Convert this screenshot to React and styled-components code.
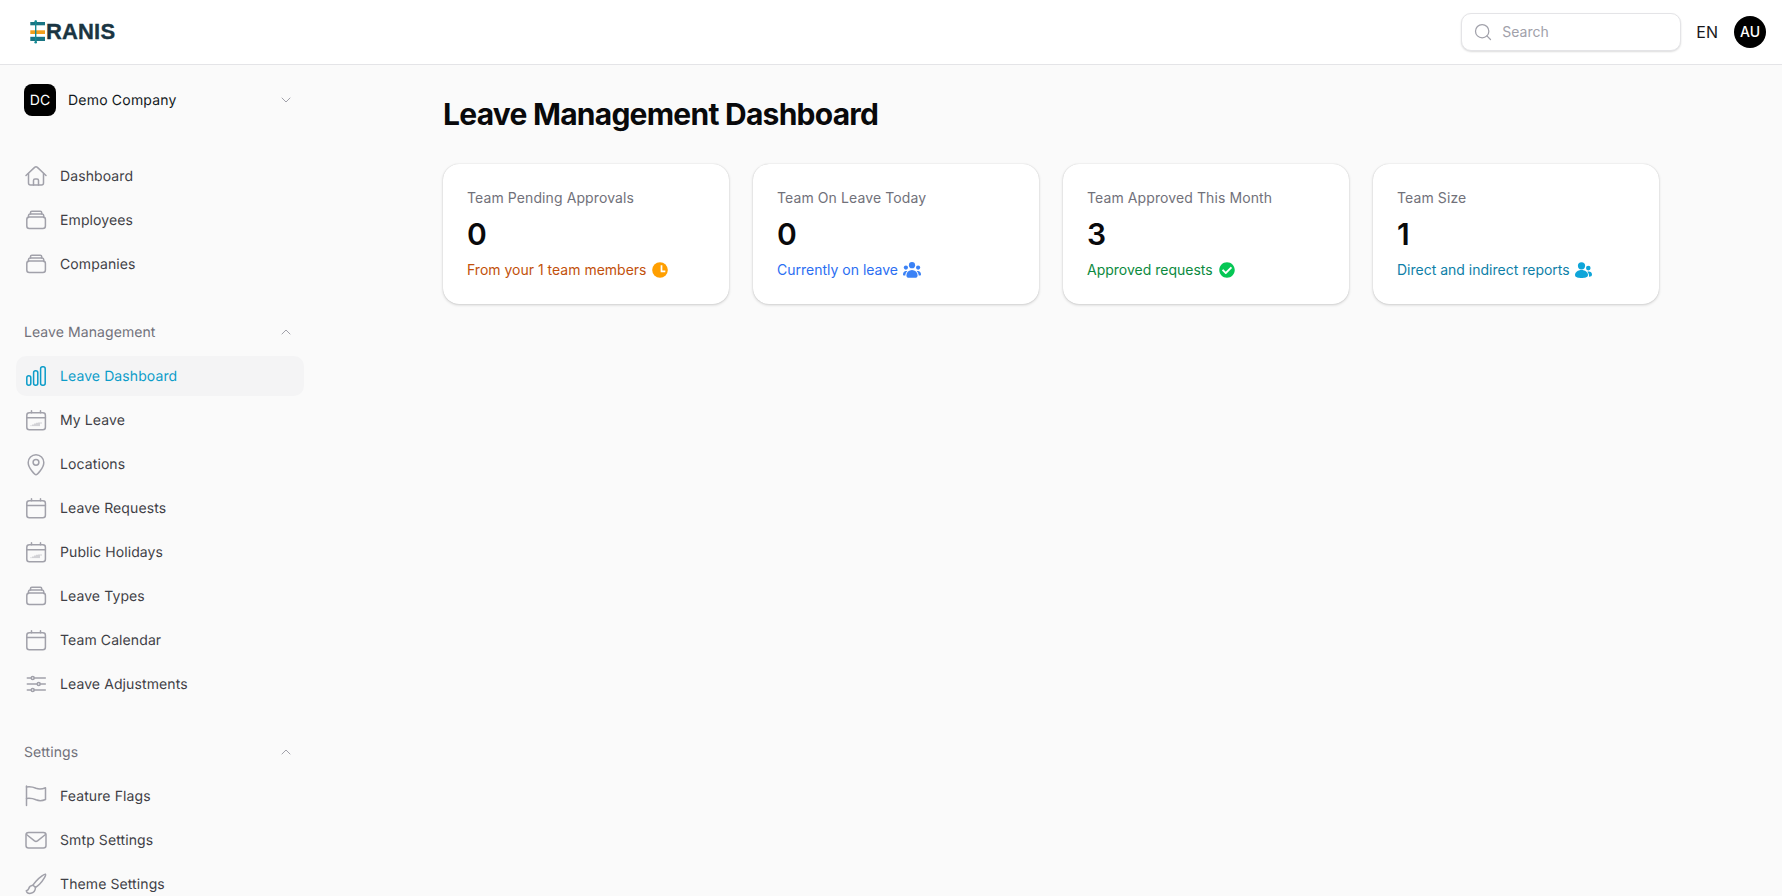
import React from 'react';
import styled, { createGlobalStyle } from 'styled-components';
import { Search, ChevronDown, ChevronUp } from 'lucide-react';
import { FaCheckCircle } from 'react-icons/fa';

const Global = createGlobalStyle`
  html, body { margin: 0; padding: 0; height: 100%; overflow: hidden; background: #fafafa; }
  body { font-family: Inter, "Noto Sans", sans-serif; color: #11181c; }
  * { box-sizing: border-box; }
`;

const Shell = styled.div`
  display: flex;
  flex-direction: column;
  height: 896px;
  overflow: hidden;
`;

const Header = styled.header`
  flex: none;
  height: 65px;
  display: flex;
  align-items: center;
  justify-content: space-between;
  padding: 0 16px 1px 30px;
  background: #fff;
  border-bottom: 1px solid #e4e4e7;
`;

const Logo = styled.div`
  display: flex;
  align-items: center;
`;

const LogoWord = styled.span`
  font-family: "Liberation Sans", Arial, sans-serif;
  font-size: 22px;
  font-weight: 700;
  line-height: 24px;
  letter-spacing: 0.15px;
  color: #1a3542;
  -webkit-text-stroke: 0.35px #1a3542;
`;

const HeaderRight = styled.div`
  display: flex;
  align-items: center;
`;

const SearchBox = styled.div`
  width: 220px;
  height: 38px;
  display: flex;
  align-items: center;
  gap: 9px;
  padding: 0 11px;
  background: #fff;
  border: 1px solid #e4e4e7;
  border-radius: 10px;
  box-shadow: 0 1px 2px rgba(0, 0, 0, 0.14);
  color: #a1a1aa;
  font-size: 14px;
  margin-right: 15px;
`;

const Lang = styled.span`
  font-size: 16px;
  color: #18181b;
  margin-right: 16px;
`;

const UserAvatar = styled.div`
  width: 32px;
  height: 32px;
  border-radius: 50%;
  background: #000;
  color: #fff;
  font-size: 14px;
  font-weight: 500;
  display: flex;
  align-items: center;
  justify-content: center;
`;

const Body = styled.div`
  flex: 1;
  min-height: 0;
  display: flex;
`;

const Sidebar = styled.aside`
  flex: none;
  width: 320px;
  padding: 19px 16px 0;
  overflow: hidden;
  text-rendering: geometricPrecision;
`;

const Company = styled.div`
  display: flex;
  align-items: center;
  gap: 12px;
  padding-left: 8px;
  height: 32px;
  margin-bottom: 40px;
  font-size: 14px;
  font-weight: 400;
  letter-spacing: 0.2px;
  color: #11181c;
`;

const CompanyBadge = styled.div`
  width: 32px;
  height: 32px;
  border-radius: 8px;
  background: #000;
  color: #fff;
  font-size: 14px;
  font-weight: 400;
  letter-spacing: 0;
  display: flex;
  align-items: center;
  justify-content: center;
`;

const Grow = styled.span`
  flex: 1;
`;

const Caret = styled.span`
  display: flex;
  width: 16px;
  margin-right: 10px;
  color: #a1a1aa;
`;

const Nav = styled.nav`
  display: flex;
  flex-direction: column;
  gap: 4px;
  margin-bottom: 38px;
`;

const SectionHead = styled.div`
  display: flex;
  align-items: center;
  height: 20px;
  padding-left: 8px;
  margin-bottom: 14px;
  font-size: 14px;
  letter-spacing: 0.08px;
  color: #71717a;
`;

const Item = styled.div`
  flex: none;
  height: 40px;
  display: flex;
  align-items: center;
  gap: 12px;
  padding: 0 8px;
  border-radius: 10px;
  font-size: 14px;
  font-weight: 400;
  letter-spacing: 0.1px;
  background: ${p => (p.$active ? '#f4f4f5' : 'transparent')};
  color: ${p => (p.$active ? '#0c9cc9' : '#3f3f46')};
  & > svg {
    flex: none;
    width: 24px;
    height: 24px;
    fill: none;
    stroke: ${p => (p.$active ? '#0c9cc9' : '#a1a1aa')};
    stroke-width: 1.5;
    stroke-linecap: round;
    stroke-linejoin: round;
  }
`;

const Main = styled.main`
  flex: 1;
  min-width: 0;
`;

const Container = styled.div`
  max-width: 1280px;
  margin: 0 auto;
  padding: 31px 32px 0;
`;

const Title = styled.h1`
  margin: 0 0 32px;
  font-size: 30px;
  line-height: 36px;
  font-weight: 700;
  letter-spacing: -0.75px;
  color: #09090b;
`;

const Cards = styled.div`
  display: grid;
  grid-template-columns: repeat(4, 1fr);
  gap: 24px;
`;

const Card = styled.div`
  height: 140px;
  padding: 24px;
  background: #fff;
  border-radius: 16px;
  box-shadow: 0 1px 3px rgba(0, 0, 0, 0.18), 0 0 1px rgba(0, 0, 0, 0.18);
`;

const CardLabel = styled.div`
  font-size: 14px;
  line-height: 20px;
  letter-spacing: 0.1px;
  color: #71717a;
`;

const CardValue = styled.div`
  margin-top: 8px;
  font-size: 30px;
  line-height: 36px;
  font-weight: 600;
  color: #09090b;
`;

const CardNote = styled.div`
  margin-top: 8px;
  display: flex;
  align-items: center;
  gap: 6px;
  font-size: 14px;
  line-height: 20px;
  color: ${p => p.$color};
`;

const NoteIcon = styled.span`
  display: flex;
  margin-left: ${p => p.$nudge || 0}px;
  color: ${p => p.$color};
  font-size: 16px;
`;

const LogoMark = () => (
  <svg width="16" height="24" viewBox="0 0 16 24">
    <rect x="0.3" y="2" width="14.7" height="3.3" fill="#1a7583" />
    <rect x="0.3" y="10.3" width="14.7" height="3.7" fill="#f29f1b" />
    <rect x="0.3" y="16.8" width="14.7" height="4.2" fill="#1a7583" />
    <rect x="5" y="0.7" width="1.4" height="22" fill="#148a94" />
    <circle cx="5.7" cy="1.5" r="1.3" fill="#148a94" />
    <circle cx="5.7" cy="22.3" r="1.3" fill="#148a94" />
  </svg>
);

const ClockIcon = () => (
  <svg width="16" height="16" viewBox="0 0 16 16">
    <circle cx="8" cy="8" r="7.8" fill="currentColor" />
    <path d="M9.5 3.3V9.3H13.3" fill="none" stroke="#fff" strokeWidth="1.7" />
  </svg>
);

const TeamIcon = () => (
  <svg width="18" height="16" viewBox="0 0 18 16" fill="currentColor">
    <circle cx="9" cy="3.2" r="3.1" />
    <circle cx="2.9" cy="5.6" r="2.1" />
    <circle cx="15.1" cy="5.6" r="2.1" />
    <path d="M3.4 13.5a5.6 5.6 0 0 1 11.2 0c0 1.6-1.2 2.3-2.2 2.3H5.6c-1 0-2.2-.7-2.2-2.3Z" />
    <path d="M0 12.6c0-2.3 1.4-3.600 3-3.600.5 0 1 .1 1.300.3-1.100 1-1.900 2.400-2 4.300H1c-.6 0-1-.4-1-1Z" />
    <path d="M18 12.600c0-2.300-1.400-3.600-3-3.600-.5 0-1 .1-1.300.3 1.100 1 1.900 2.400 2 4.300H17c.6 0 1-.4 1-1Z" />
  </svg>
);

const DuoIcon = () => (
  <svg width="17" height="16" viewBox="0 0 17 16" fill="currentColor">
    <circle cx="6.5" cy="3.8" r="3.6" />
    <circle cx="13.3" cy="6.1" r="2.3" />
    <path d="M0 13c0-3 2.900-5.100 6.500-5.100S13 10 13 13c0 2.200-3 3-6.500 3S0 15.200 0 13Z" />
    <path d="M14 14.800c.2-2-.4-3.700-1.700-5 .5-.2 1-.3 1.500-.3 1.800 0 3.200 1.300 3.200 3 0 1.400-1.100 2.200-3 2.300Z" />
  </svg>
);

const icons = {
  home: (
    <>
      <path d="M2 11.5 10.6 3.4a2 2 0 0 1 2.8 0L22 11.5" />
      <path d="M4.5 9.5V19a2 2 0 0 0 2 2h11a2 2 0 0 0 2-2V9.5" />
      <path d="M9.5 21v-4.500a1.500 1.500 0 0 1 1.500-1.500h2a1.500 1.500 0 0 1 1.500 1.500V21" />
    </>
  ),
  stack: (
    <>
      <rect x="2.8" y="9" width="18.6" height="11.6" rx="2.5" />
      <path d="M4.5 9.500V7.600A1.600 1.600 0 0 1 6 6h12.200a1.600 1.600 0 0 1 1.500 1.600v1.900" />
      <path d="M6.500 6V4.600A1.400 1.400 0 0 1 7.900 3.200h8.400a1.400 1.400 0 0 1 1.400 1.400V6" />
    </>
  ),
  bars: (
    <>
      <rect x="2.8" y="11.8" width="4" height="9.4" rx="2" />
      <rect x="9.6" y="6.8" width="4.2" height="14.4" rx="2" />
      <rect x="16.6" y="2.8" width="4.6" height="18.4" rx="2" />
    </>
  ),
  calendarDots: (
    <>
      <rect x="2.8" y="4.8" width="18.6" height="17" rx="2.5" />
      <path d="M2.8 9.800h18.600M7.500 2.800v2M16.500 2.800v2" />
      <path d="M7 17.500v.6M9 16.500v1.600M11 15.500v2.600M13 14.800v3.300M15 14.500v3.600M17 14.500v1" strokeWidth="0.9" strokeLinecap="butt" />
    </>
  ),
  pin: (
    <>
      <path d="M12 22.800c-1 0-7.800-6.600-7.800-12.200a7.800 7.800 0 0 1 15.600 0C19.800 16.200 13 22.800 12 22.800Z" />
      <circle cx="12" cy="10.3" r="2.9" />
    </>
  ),
  calendar: (
    <>
      <rect x="2.8" y="4.8" width="18.6" height="17" rx="2.5" />
      <path d="M2.8 9.500h18.600M7.500 2.800v2M16.500 2.800v2" />
    </>
  ),
  sliders: (
    <>
      <path d="M3.300 6h3.800M10.300 6h11M3.300 12h9.800M16.300 12h5M3.300 18h3.800M10.300 18h11" />
      <circle cx="8.7" cy="6" r="1.5" />
      <circle cx="14.7" cy="12" r="1.5" />
      <circle cx="8.7" cy="18" r="1.5" />
    </>
  ),
  flag: (
    <>
      <path d="M2.500 2v19.500" />
      <path d="M2.500 3c4-.6 7 .2 9.500 1.300 3 1.200 6 1 9.500-.5V15.500c-3.500 1.500-6.500 1.500-9.500.3-2.500-1.100-5.500-1.800-9.500-1.300" />
    </>
  ),
  mail: (
    <>
      <rect x="2" y="4.5" width="20" height="15.5" rx="2.5" />
      <path d="m2.500 6.500 8 6.300a2.500 2.500 0 0 0 3 0l8-6.300" />
    </>
  ),
  brush: (
    <>
      <path d="M21.500 2.200c-.6-.5-5.500 2.500-9.500 7-1.600 1.800-2.500 3-3 4l2.500 2.200c1-.6 2.300-1.600 4-3.200 4.200-4 6.700-9.300 6-10Z" />
      <path d="M9 13.300c-2.500.3-3.800 1.500-4.200 3.200-.3 1.400-1.300 2-2.500 2.200.6 2 2.500 3 4.500 2.600 2.700-.5 4.500-2.500 4.700-5.800" />
    </>
  ),
};

const NavItem = ({ icon, label, active }) => (
  <Item $active={active}>
    <svg viewBox="0 0 24 24">{icons[icon]}</svg>
    <span>{label}</span>
  </Item>
);

const cards = [
  { label: 'Team Pending Approvals', value: '0', note: 'From your 1 team members', color: '#c2510c', iconColor: '#ff9f00', Icon: ClockIcon },
  { label: 'Team On Leave Today', value: '0', note: 'Currently on leave', color: '#2b6ef2', iconColor: '#3b82f6', Icon: TeamIcon, nudge: -1 },
  { label: 'Team Approved This Month', value: '3', note: 'Approved requests', color: '#0b8a3e', iconColor: '#06c755', Icon: FaCheckCircle },
  { label: 'Team Size', value: '1', note: 'Direct and indirect reports', color: '#0e7fa8', iconColor: '#0ea5d9', Icon: DuoIcon, nudge: -1 },
];

export default function App() {
  return (
    <Shell>
      <Global />
      <Header>
        <Logo>
          <LogoMark />
          <LogoWord>RANIS</LogoWord>
        </Logo>
        <HeaderRight>
          <SearchBox>
            <Search size={20} strokeWidth={1.5} />
            <span>Search</span>
          </SearchBox>
          <Lang>EN</Lang>
          <UserAvatar>AU</UserAvatar>
        </HeaderRight>
      </Header>
      <Body>
        <Sidebar>
          <Company>
            <CompanyBadge>DC</CompanyBadge>
            <Grow>Demo Company</Grow>
            <Caret><ChevronDown size={16} strokeWidth={1.5} /></Caret>
          </Company>
          <Nav>
            <NavItem icon="home" label="Dashboard" />
            <NavItem icon="stack" label="Employees" />
            <NavItem icon="stack" label="Companies" />
          </Nav>
          <SectionHead>
            <Grow>Leave Management</Grow>
            <Caret><ChevronUp size={16} strokeWidth={1.5} /></Caret>
          </SectionHead>
          <Nav>
            <NavItem icon="bars" label="Leave Dashboard" active />
            <NavItem icon="calendarDots" label="My Leave" />
            <NavItem icon="pin" label="Locations" />
            <NavItem icon="calendar" label="Leave Requests" />
            <NavItem icon="calendarDots" label="Public Holidays" />
            <NavItem icon="stack" label="Leave Types" />
            <NavItem icon="calendar" label="Team Calendar" />
            <NavItem icon="sliders" label="Leave Adjustments" />
          </Nav>
          <SectionHead>
            <Grow>Settings</Grow>
            <Caret><ChevronUp size={16} strokeWidth={1.5} /></Caret>
          </SectionHead>
          <Nav>
            <NavItem icon="flag" label="Feature Flags" />
            <NavItem icon="mail" label="Smtp Settings" />
            <NavItem icon="brush" label="Theme Settings" />
          </Nav>
        </Sidebar>
        <Main>
          <Container>
            <Title>Leave Management Dashboard</Title>
            <Cards>
              {cards.map(c => (
                <Card key={c.label}>
                  <CardLabel>{c.label}</CardLabel>
                  <CardValue>{c.value}</CardValue>
                  <CardNote $color={c.color}>
                    <span>{c.note}</span>
                    <NoteIcon $color={c.iconColor} $nudge={c.nudge}><c.Icon /></NoteIcon>
                  </CardNote>
                </Card>
              ))}
            </Cards>
          </Container>
        </Main>
      </Body>
    </Shell>
  );
}
